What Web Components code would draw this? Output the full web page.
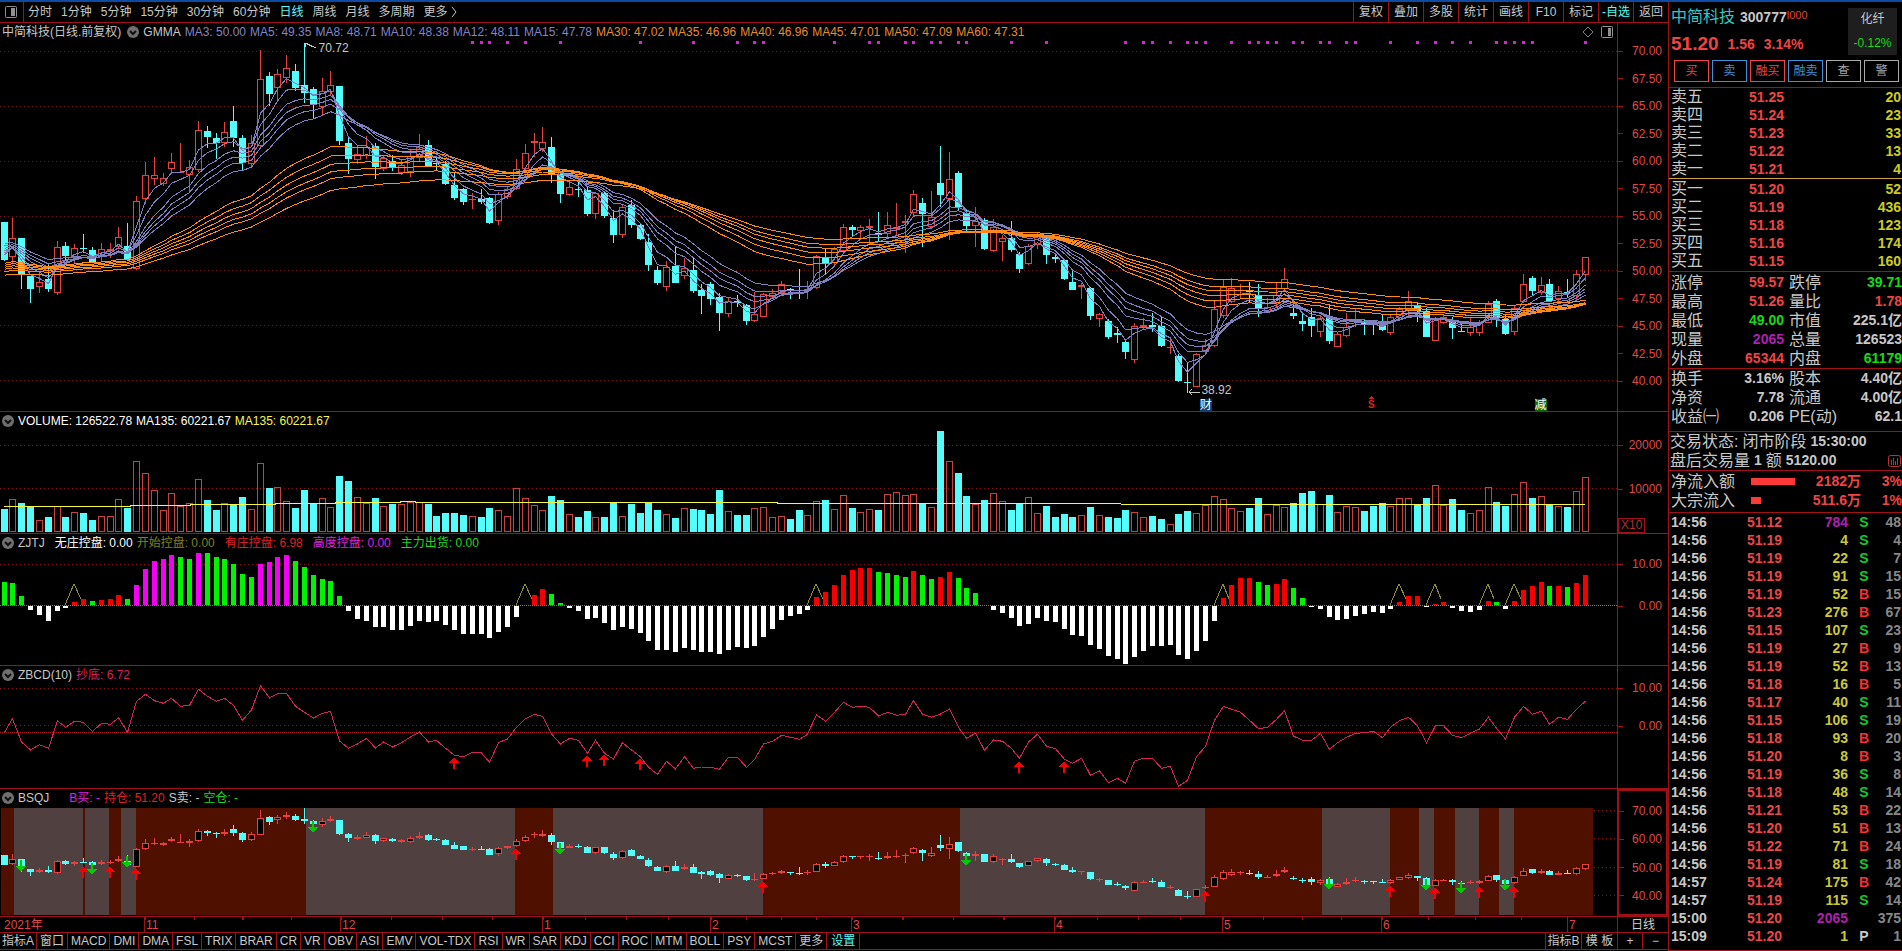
<!DOCTYPE html>
<html lang="zh-CN">
<head>
<meta charset="utf-8">
<title>中简科技 300777</title>
<style>
  html, body {
    background: #000000;
    height: 100%;
    margin: 0;
  }
</style>
</head>
<body>
<stock-app></stock-app>

<script>
  // Vertical readings are in rows, three to a pixel
  const ROWS = 3;
  const PLOT_WIDTH = 1617;

  // Direction, high, body top, body bottom, low
  const CANDLES = `
    d 665 665 780 782;u 655 715 772 788;d 713 713 822 866;d 828 828 868 908;u 820 846 860 878;d 795 838 866 876
    u 722 742 880 886;d 726 738 767 780;u 732 745 775 790;d 703 744 746 760;d 740 750 785 788;u 728 748 772 785
    u 730 748 752 775;u 682 712 742 748;d 668 738 780 783;u 588 604 808 810;u 487 526 596 612;u 472 526 536 555
    u 520 533 551 558;u 458 487 506 522;u 428 516 518 520;u 480 500 524 575;u 363 391 511 516;d 378 393 411 445
    d 400 413 428 476;u 366 397 430 442;d 318 363 415 442;d 405 414 489 514;u 405 430 492 505;u 150 238 437 440
    d 215 228 282 318;u 208 223 265 305;u 165 205 233 250;d 193 213 263 272;d 128 255 278 308;d 262 268 311 358
    u 235 274 320 348;u 213 256 276 288;d 258 258 422 435;d 415 430 476 522;u 438 462 480 493;u 407 440 467 476
    d 430 438 501 537;u 468 474 506 512;d 466 484 504 514;u 478 495 518 524;u 450 467 515 532;u 402 442 475 486
    d 420 436 498 500;d 474 488 492 510;d 482 492 551 556;d 520 555 595 600;d 565 568 606 615;u 578 596 598 626
    d 568 597 606 612;d 590 594 669 672;u 575 583 662 675;u 560 567 592 596;u 477 507 566 570;u 432 458 508 520
    u 398 424 430 470;u 381 427 447 455;d 411 441 521 548;d 520 523 581 610;u 546 560 584 587;d 545 568 570 592
    d 562 570 641 648;u 575 580 641 658;d 575 580 648 655;d 630 655 704 728;u 612 622 704 715;d 600 614 675 683
    d 670 675 717 720;d 703 727 795 812;d 798 810 848 856;u 782 800 860 873;d 738 798 848 850;u 774 804 827 838
    d 775 810 872 880;d 853 870 888 942;d 846 852 896 916;d 880 891 938 992;u 890 902 941 950;d 885 903 909 920
    d 912 915 963 974;u 876 942 962 965;u 878 883 950 950;u 866 878 892 898;u 843 853 880 885;d 863 868 871 896
    d 807 871 873 896;u 843 868 872 896;u 765 769 863 868;d 746 775 790 822;u 742 748 790 795;u 672 682 753 758
    d 674 681 690 710;u 675 680 692 718;u 658 677 683 735;d 635 700 706 727;u 636 676 702 710;u 610 680 686 706
    u 645 663 669 758;u 570 583 640 652;d 594 609 641 740;u 572 650 682 688;d 438 549 585 622;u 456 538 596 720
    d 513 518 622 632;d 630 640 678 692;u 622 662 677 740;d 655 660 747 750;u 657 680 752 755;u 705 713 727 782
    d 662 714 750 757;d 755 762 806 818;u 732 738 793 796;u 698 705 735 748;d 705 712 765 792;d 760 771 776 790
    d 777 780 836 840;d 812 846 869 871;u 848 854 860 896;d 860 864 948 960;u 940 943 956 980;d 958 963 1010 1016
    d 980 999 1006 1028;d 1020 1026 1056 1076;u 970 979 1080 1088;u 955 976 982 990;d 938 975 982 996;d 952 977 1038 1041
    u 1018 1040 1042 1062;d 1062 1068 1143 1146;d 1085 1147 1148 1180;u 1060 1063 1160 1160;u 1018 1036 1055 1062;u 905 928 1037 1042
    u 840 860 948 955;u 833 863 905 910;u 852 870 873 898;d 845 873 875 905;d 852 886 927 950;u 895 920 935 940
    u 845 884 910 920;u 805 837 868 875;d 908 939 947 957;d 940 963 972 992;d 925 951 978 1010;u 945 955 995 1012
    d 918 948 1023 1032;u 998 1003 1040 1042;u 940 982 1007 1010;u 927 960 964 982;d 960 968 970 1005;d 965 969 971 1005
    d 945 976 989 992;u 942 952 998 1004;u 920 928 955 960;u 872 904 930 945;d 908 915 933 965;d 925 932 1010 1011
    u 950 954 1024 1024;u 945 952 968 972;d 950 960 985 1017;d 965 993 995 997;u 953 982 998 1008;u 960 970 998 1007
    u 903 912 968 970;d 897 903 955 980;d 945 957 1001 1005;u 915 925 997 1004;u 822 853 906 910;d 828 834 872 885
    u 832 856 880 885;d 838 852 902 905;u 857 872 898 905;d 837 875 880 892;u 810 823 888 900;u 770 772 826 842
  `.trim().split( /[;\n]+/ ).map( ( entry ) => {
    const [kind, ...rows] = entry.trim().split( ' ' );
    const [high, top, bottom, low] = rows.map( Number );
    return {up: kind === 'u', high, top, bottom, low};
  } );

  const VOLUMES = [
    68, 98, 86, 75, 37, 44, 79, 44, 59, 56, 35, 47, 49, 98, 71, 214, 176, 127, 65, 118,
    77, 86, 160, 95, 65, 86, 80, 104, 68, 208, 131, 136, 94, 71, 125, 85, 101, 76, 167, 152,
    106, 86, 101, 79, 83, 83, 89, 89, 83, 47, 56, 56, 50, 47, 44, 71, 65, 47, 133, 101,
    82, 65, 107, 95, 55, 44, 62, 44, 44, 88, 49, 83, 56, 87, 65, 53, 41, 71, 68, 65,
    53, 125, 62, 50, 50, 71, 74, 44, 47, 38, 65, 50, 92, 95, 68, 110, 71, 59, 68, 65,
    113, 119, 110, 113, 85, 74, 302, 212, 176, 107, 83, 95, 116, 92, 65, 84, 104, 56, 77, 44,
    53, 44, 50, 74, 50, 44, 41, 65, 59, 44, 47, 38, 23, 53, 62, 56, 82, 107, 98, 71,
    62, 71, 101, 53, 80, 74, 86, 116, 122, 85, 110, 59, 77, 74, 62, 78, 86, 77, 101, 101,
    83, 101, 140, 80, 98, 65, 56, 65, 134, 89, 78, 113, 149, 101, 107, 83, 79, 74, 122, 166
  ];

  // g green, m magenta, r red, no letter for white
  const CONTROL = `
    g70 g67 g28 -13 -28 -46 -16 -7 r10 r19 g13 r16 r19 r31 g19 m61 m109 m133 m139 m151
    g145 g139 m157 g157 g145 g139 g124 g94 g85 m124 m130 m145 m151 g133 g115 g91 g79 g73 g28 -16
    -40 -46 -64 -64 -73 -73 -61 -46 -49 -46 -58 -73 -85 -85 -85 -97 -79 -64 -34 r1
    r31 r49 g34 g7 -7 -16 -40 -37 -52 -73 -64 -70 -82 -106 -133 -133 -139 -127 -133 -139
    -139 -145 -133 -124 -127 -121 -94 -70 -43 -31 -25 -13 r25 r40 r61 r91 r106 r112 r112 g100
    g97 g91 g85 r103 g91 g79 r85 r100 g82 g52 g37 0 -13 -22 -37 -61 -55 -37 -46 -49
    -70 -88 -91 -118 -130 -151 -160 -175 -154 -136 -121 -121 -118 -148 -160 -136 -106 -45 r20 r59
    r80 r80 g68 g59 r62 r77 g50 g20 -3 -9 -34 -43 -40 -31 -25 -19 -22 -10 r8 r26
    r26 -3 r4 r8 -6 -16 -19 -13 r11 g8 -10 r11 r44 r56 r68 g56 r56 g53 r65 r89
  `.trim().split( /\s+/ );
  const CARETS = [8, 59, 92, 138, 158, 162, 168, 171];

  const BOTTOM_FISHING = [
    217, 176, 246, 270, 254, 265, 182, 202, 184, 187, 214, 190, 193, 173, 217, 124, 103, 122, 130, 115,
    139, 136, 88, 109, 124, 115, 136, 181, 150, 77, 114, 101, 100, 139, 157, 174, 160, 154, 243, 265,
    252, 235, 264, 246, 261, 248, 231, 216, 246, 241, 265, 286, 290, 277, 279, 307, 248, 237, 202, 176,
    163, 169, 222, 252, 235, 241, 280, 241, 280, 297, 248, 270, 290, 322, 343, 304, 327, 290, 325, 321,
    321, 328, 292, 292, 322, 299, 252, 244, 226, 232, 238, 223, 164, 184, 157, 127, 142, 139, 142, 168,
    157, 166, 163, 122, 163, 172, 162, 147, 202, 235, 220, 271, 240, 244, 265, 295, 246, 223, 259, 266,
    298, 310, 295, 346, 332, 368, 355, 370, 304, 295, 295, 325, 319, 379, 361, 290, 259, 181, 139, 148,
    157, 181, 206, 202, 178, 152, 228, 241, 241, 220, 268, 248, 232, 220, 218, 214, 233, 202, 182, 172,
    197, 249, 197, 197, 226, 233, 220, 207, 172, 205, 237, 172, 139, 163, 154, 193, 172, 178, 148, 123
  ];

  const EVENT_DOTS = [
    53, 54, 55, 57, 59, 63, 72, 78, 83, 85, 86, 94, 98, 99, 102, 103, 105, 106, 108, 109, 114, 118,
    127, 129, 130, 132, 134, 135, 136, 139, 141, 142, 143, 144, 146, 147, 149, 150, 152, 153, 157,
    160, 162, 164, 166, 169, 170, 171, 172, 173, 179
  ];

  // Position bands, alternating hold and empty
  const BANDS = [
    1, 14, 83, 85, 109, 121, 136, 306, 515, 553, 763, 960, 1205, 1322, 1390, 1419, 1434, 1455, 1479, 1499, 1514, 1593
  ];

  const centre = ( index ) => Math.floor( 4 + index * 8.8335 );
  const pixel = ( rows ) => Math.round( rows / ROWS );

  function rect( x, y, width, height, fill ) {
    return `<rect x="${x}" y="${y}" width="${width}" height="${height}" fill="${fill}"/>`;
  }

  function frame( x, y, width, height, stroke, fill = 'none' ) {
    return `<rect x="${x + 0.5}" y="${y + 0.5}" width="${width - 1}" height="${Math.max( height - 1, 1 )}" fill="${fill}" stroke="${stroke}"/>`;
  }

  function gridline( y, dash = '1 3', stroke = '#8c1212', start = 0 ) {
    return `<path d="M${start} ${y + 0.5}H${PLOT_WIDTH}" stroke="${stroke}" stroke-dasharray="${dash}"/>`;
  }

  function polyline( points, stroke ) {
    return `<polyline points="${points.join( ' ' )}" fill="none" stroke="${stroke}"/>`;
  }

  function arrow( x, y, up, fill ) {
    const way = up ? 1 : -1;
    return `<path d="M${x} ${y}l5 ${6 * way}h-4v${6 * way}h-2v${-6 * way}h-4z" fill="${fill}"/>`;
  }

  function candles( convert, fill ) {
    return CANDLES.map( ( bar, index ) => {
      const x = centre( index );
      const high = convert( bar.high );
      const top = convert( bar.top );
      const bottom = convert( bar.bottom );
      const low = convert( bar.low );
      const height = Math.max( bottom - top, 1 );

      if( bar.up ) {
        const body = height > 2 ? frame( x - 3, top, 7, height, '#e84040', fill ) : rect( x - 3, top, 7, height, '#e84040' );
        return rect( x, high, 1, Math.max( top - high, 0 ), '#e84040' ) + rect( x, bottom, 1, Math.max( low - bottom, 0 ), '#e84040' ) + body;
      }

      return rect( x, high, 1, Math.max( low - high, 1 ), '#54fcfc' ) + rect( x - 3, top, 7, height, '#54fcfc' );
    } ).join( '' );
  }

  // Exponential average of the closes
  function average( period, seed ) {
    let last = seed;
    return CANDLES.map( ( bar, index ) => {
      const close = bar.up ? bar.top : bar.bottom;

      if( index > 0 ) {
        last += ( close - last ) * 2 / ( period + 1 );
      }

      return `${centre( index ) + 0.5},${( last / ROWS ).toFixed( 1 )}`;
    } );
  }

  const PLOTS = {
    price() {
      const slow = [[30, 790], [35, 796], [40, 802], [45, 808], [50, 815], [60, 826]];
      const fast = [[3, 765], [5, 758], [8, 752], [10, 745], [12, 738], [15, 730]];
      return [51, 106, 161, 216, 270, 325, 380].map( ( y ) => gridline( y, '1 3', '#701010' ) ).join( '' ) +
        EVENT_DOTS.map( ( index ) => rect( centre( index ) - 1, 41, 3, 3, '#d822d8' ) ).join( '' ) +
        candles( pixel, 'none' ) +
        fast.map( ( [period, seed] ) => polyline( average( period, seed ), '#8080c0' ) ).join( '' ) +
        slow.map( ( [period, seed] ) => polyline( average( period, seed ), '#ff8a1c' ) ).join( '' ) +
        '<path d="M305 43l11 5M305 43h3M305 43v4M1189 392h11M1189 392l3 -3M1189 392l3 3" stroke="#c8c8c8" fill="none"/>' +
        '<path d="M1371 396l3 3h-6z" fill="#e02020"/>';
    },

    volume() {
      const line = [[4, 75], [130, 75], [131, 78], [190, 78], [191, 81], [275, 81], [276, 85], [335, 85], [336, 88], [400, 88], [401, 91], [415, 91], [416, 88], [777, 88], [778, 85], [1120, 85], [1122, 82], [1585, 80]];
      return gridline( 445 ) + gridline( 488 ) + VOLUMES.map( ( rows, index ) => {
        const height = pixel( rows );
        const x = centre( index ) - 3;
        return CANDLES[index].up ? frame( x, 532 - height, 7, height, '#c84040' ) : rect( x, 532 - height, 7, height, '#54fcfc' );
      } ).join( '' ) + polyline( line.map( ( [x, rows] ) => `${x},${531.5 - pixel( rows )}` ), '#f8f840' );
    },

    control() {
      const fills = {g: '#00f400', m: '#f400f4', r: '#f40000'};
      return gridline( 564 ) + gridline( 605, '1 1', '#c06018' ) + CONTROL.map( ( entry, index ) => {
        const fill = fills[entry[0]] || '#ffffff';
        const height = pixel( Math.abs( Number( entry.replace( /^[gmr]/, '' ) ) ) );
        return rect( centre( index ) - 2, fill === '#ffffff' ? 606 : 605 - height, 5, height, fill );
      } ).join( '' ) + CARETS.map( ( index ) => {
        return `<path d="M${centre( index - 1 )} 605L${centre( index )} 584L${centre( index + 1 ) - 2} 599" stroke="#8c8c30" fill="none"/>`;
      } ).join( '' );
    },

    fishing() {
      const marks = [[51, 292], [66, 286], [68, 283], [72, 293], [115, 302], [120, 303]];
      return gridline( 688 ) + gridline( 725 ) + gridline( 732, '1 1', '#a81818' ) +
        polyline( BOTTOM_FISHING.map( ( rows, index ) => `${centre( index ) + 0.5},${( 660 + rows / ROWS ).toFixed( 1 )}` ), '#d82060' ) +
        marks.map( ( [index, rows] ) => arrow( centre( index ), 660 + pixel( rows ), true, '#f80000' ) ).join( '' );
    },

    position() {
      const sells = [[2, 635], [10, 645], [14, 625], [35, 518], [63, 584], [109, 617], [150, 690], [161, 692], [165, 702], [170, 692]];
      const buys = [[9, 618], [12, 617], [15, 625], [58, 565], [86, 664], [136, 690], [157, 675], [162, 682], [167, 678], [171, 677]];
      const convert = ( rows ) => Math.round( 660 + ( 452 + ( rows - 154 ) * 0.2588 ) / ROWS );
      return [810, 838, 867, 895].map( ( y ) => gridline( y, '1 3', '#8c1212', 1594 ) ).join( '' ) +
        BANDS.slice( 1 ).map( ( end, index ) => rect( BANDS[index], 808, end - BANDS[index], 107, index % 2 ? '#504040' : '#501000' ) ).join( '' ) +
        candles( convert, '#000000' ) +
        sells.map( ( [index, rows] ) => arrow( centre( index ), 660 + pixel( rows ), false, '#00cc00' ) ).join( '' ) +
        buys.map( ( [index, rows] ) => arrow( centre( index ), 660 + pixel( rows ), true, '#f80000' ) ).join( '' );
    }
  };

  // Root helper
  function attach( element, markup ) {
    const template = document.createElement( 'template' );
    template.innerHTML = markup;
    element.attachShadow( {mode: 'open'} );
    element.shadowRoot.appendChild( template.content.cloneNode( true ) );
  }

  const RESET = /* css */ `
    button {
      background: none;
      border: none;
      color: inherit;
      cursor: pointer;
      font: inherit;
      margin: 0;
      padding: 0;
      white-space: nowrap;
    }
  `;

  class StockToolbar extends HTMLElement {
    constructor() {
      super();

      const periods = ['分时', '1分钟', '5分钟', '15分钟', '30分钟', '60分钟', '日线', '周线', '月线', '多周期'];
      const actions = ['复权', '叠加', '多股', '统计', '画线', 'F10', '标记', '-自选', '返回'];

      attach( this, /* template */ `
        <style>
          ${RESET}

          :host {
            border-bottom: solid 1px var( --line );
            box-sizing: border-box;
            display: flex;
            height: 21px;
            justify-content: space-between;
            line-height: 20px;
          }

          nav, div {
            display: flex;
          }

          nav {
            gap: 9px;
          }

          .panel {
            align-items: center;
            border-right: solid 1px var( --line );
            display: flex;
            margin-right: -5px;
            padding-left: 5px;
            width: 24px;
          }

          .more {
            align-items: center;
            display: flex;
            gap: 3px;
          }

          .active {
            color: #54fcfc;
          }

          .actions button {
            border-left: solid 1px var( --line );
            box-sizing: border-box;
            text-align: center;
            width: 35px;
          }
        </style>
        <nav>
          <button class="panel" type="button" aria-label="侧栏">
            <svg width="12" height="12" viewBox="0 0 12 12"><rect x="0.5" y="0.5" width="11" height="11" rx="1" fill="none" stroke="#909090"/><rect x="6" y="2" width="4" height="8" fill="#909090"/></svg>
          </button>
          ${periods.map( ( name ) => `<button type="button" class="${name === '日线' ? 'active' : ''}">${name}</button>` ).join( '' )}
          <button class="more" type="button">更多<svg width="6" height="10" viewBox="0 0 6 10"><path d="M1 0l4 5l-4 5" fill="none" stroke="#c0c0c0"/></svg></button>
        </nav>
        <div class="actions">
          ${actions.map( ( name ) => `<button type="button" class="${name === '-自选' ? 'active' : ''}">${name}</button>` ).join( '' )}
        </div>
      ` );
    }
  }

  class ChartPane extends HTMLElement {
    constructor() {
      super();

      attach( this, /* template */ `
        <style>
          :host {
            border-bottom: solid 1px var( --line );
            box-sizing: border-box;
            display: flex;
            min-height: 0;
          }

          .plot {
            display: flex;
            flex: 1;
            flex-direction: column;
            min-width: 0;
            position: relative;
          }

          header {
            align-items: center;
            display: flex;
            gap: 4px;
            height: 18px;
            line-height: 18px;
            white-space: nowrap;
          }

          .chart {
            display: block;
            flex: 1;
            min-height: 0;
            width: 100%;
          }
        </style>
        <div class="plot">
          <header><slot></slot></header>
          <svg class="chart" preserveAspectRatio="none" shape-rendering="crispEdges"></svg>
          <slot name="mark"></slot>
        </div>
        <slot name="axis"></slot>
      ` );

      this.$chart = this.shadowRoot.querySelector( '.chart' );
    }

    // Setup
    connectedCallback() {
      this.$chart.setAttribute( 'viewBox', `0 ${this.getAttribute( 'top' )} ${PLOT_WIDTH} ${this.getAttribute( 'span' )}` );
      this.$chart.innerHTML = PLOTS[this.getAttribute( 'plot' )]();
    }
  }

  class PaneToggle extends HTMLElement {
    constructor() {
      super();

      attach( this, /* template */ `
        <style>
          ${RESET}

          :host {
            display: block;
            height: 14px;
            width: 12px;
          }

          button, svg {
            display: block;
          }
        </style>
        <button type="button" aria-label="指标菜单">
          <svg width="12" height="14" viewBox="0 0 12 14"><circle cx="6" cy="7" r="6" fill="#707070"/><path d="M3 6l3 3l3 -3" fill="none" stroke="#101010" stroke-width="2"/></svg>
        </button>
      ` );
    }
  }

  class ValueAxis extends HTMLElement {
    constructor() {
      super();

      attach( this, /* template */ `
        <style>
          :host {
            border-left: solid 1px var( --line );
            box-sizing: border-box;
            color: #e04848;
            display: flex;
            flex: none;
            flex-direction: column;
            justify-content: space-between;
            line-height: 16px;
            padding-right: 6px;
            position: relative;
            text-align: right;
            width: 51px;
          }

          :host( [selected] ) {
            border: solid 2px #a01014;
          }

          .labels {
            display: contents;
          }

          .labels span {
            background: linear-gradient( var( --line ), var( --line ) ) left center / 5px 1px no-repeat;
            display: block;
          }

          .unit {
            border: solid 1px var( --line );
            bottom: 0;
            color: #b03030;
            left: 0;
            line-height: 13px;
            padding: 0 2px;
            position: absolute;
          }

          .unit:empty {
            display: none;
          }
        </style>
        <div class="labels"></div>
        <span class="unit"></span>
      ` );

      // Elements
      this.$labels = this.shadowRoot.querySelector( '.labels' );
      this.$unit = this.shadowRoot.querySelector( '.unit' );
    }

    // Setup
    connectedCallback() {
      this.$labels.innerHTML = this.getAttribute( 'labels' ).split( ' ' ).map( ( label ) => `<span>${label}</span>` ).join( '' );
      this.$unit.textContent = this.getAttribute( 'unit' );
    }
  }

  class TimeAxis extends HTMLElement {
    constructor() {
      super();

      const months = ['11', '12', '1', '2', '3', '4', '5', '6', '7'];

      attach( this, /* template */ `
        <style>
          :host {
            border-bottom: solid 1px var( --line );
            box-sizing: border-box;
            color: #e04848;
            display: flex;
            height: 16px;
            line-height: 16px;
          }

          .months {
            display: grid;
            flex: 1;
            grid-template-columns: 144fr 196fr 202fr 168fr 141fr 203fr 168fr 159fr 186fr 50fr;
          }

          .year {
            padding-left: 4px;
          }

          .month {
            background: repeating-linear-gradient( 90deg, var( --line ) 0 1px, transparent 1px 25% ) top / 100% 3px no-repeat;
            border-left: solid 1px var( --line );
            padding-left: 1px;
          }

          .month:last-child {
            background: none;
          }

          .period {
            border-left: solid 1px var( --line );
            box-sizing: border-box;
            color: #d0d0d0;
            text-align: center;
            width: 51px;
          }
        </style>
        <div class="months">
          <span class="year">2021年</span>
          ${months.map( ( month ) => `<span class="month">${month}</span>` ).join( '' )}
        </div>
        <span class="period">日线</span>
      ` );
    }
  }

  class IndicatorTabs extends HTMLElement {
    constructor() {
      super();

      const names = [
        '指标A', '窗口', 'MACD', 'DMI', 'DMA', 'FSL', 'TRIX', 'BRAR', 'CR', 'VR', 'OBV', 'ASI', 'EMV', 'VOL-TDX',
        'RSI', 'WR', 'SAR', 'KDJ', 'CCI', 'ROC', 'MTM', 'BOLL', 'PSY', 'MCST', '更多', '设置'
      ];

      attach( this, /* template */ `
        <style>
          ${RESET}

          :host {
            border-bottom: solid 1px var( --line );
            box-sizing: border-box;
            display: flex;
            height: 17px;
            justify-content: space-between;
            line-height: 16px;
          }

          div {
            display: flex;
          }

          .names button {
            border-right: solid 1px var( --line );
            padding: 0 3px;
          }

          .names button:first-child {
            padding: 0 2px;
          }

          .names button:last-child {
            color: #54fcfc;
            padding: 0 4px;
          }

          .tools button {
            border-left: solid 1px var( --line );
            box-sizing: border-box;
            text-align: center;
            width: 36px;
          }

          .tools .zoom {
            width: 25px;
          }

          .tools .zoom:last-child {
            width: 26px;
          }
        </style>
        <div class="names">
          ${names.map( ( name ) => `<button type="button">${name}</button>` ).join( '' )}
        </div>
        <div class="tools">
          <button type="button">指标B</button>
          <button type="button">模 板</button>
          <button class="zoom" type="button">+</button>
          <button class="zoom" type="button">−</button>
        </div>
      ` );
    }
  }

  class QuotePanel extends HTMLElement {
    constructor() {
      super();

      const sells = [['卖五', '51.25', 20], ['卖四', '51.24', 23], ['卖三', '51.23', 33], ['卖二', '51.22', 13], ['卖一', '51.21', 4]];
      const buys = [['买一', '51.20', 52], ['买二', '51.19', 436], ['买三', '51.18', 123], ['买四', '51.16', 174], ['买五', '51.15', 160]];
      const day = [
        ['涨停', '59.57', 'red', '跌停', '39.71', 'green'],
        ['最高', '51.26', 'red', '量比', '1.78', 'red'],
        ['最低', '49.00', 'green', '市值', '225.1亿', ''],
        ['现量', '2065', 'purple', '总量', '126523', ''],
        ['外盘', '65344', 'red', '内盘', '61179', 'green']
      ];
      const company = [
        ['换手', '3.16%', '', '股本', '4.40亿', ''],
        ['净资', '7.78', '', '流通', '4.00亿', ''],
        ['收益㈠', '0.206', '', 'PE(动)', '62.1', '']
      ];
      const order = ( rows ) => rows.map( ( [label, price, amount] ) => `<tr><th>${label}</th><td class="red">${price}</td><td class="yellow">${amount}</td></tr>` ).join( '' );
      const facts = ( rows ) => rows.map( ( row ) => `<tr><th>${row[0]}</th><td class="${row[2]}">${row[1]}</td><th>${row[3]}</th><td class="${row[5]}">${row[4]}</td></tr>` ).join( '' );

      attach( this, /* template */ `
        <style>
          ${RESET}

          :host {
            border-left: solid 1px var( --line );
            box-sizing: border-box;
            display: flex;
            flex-direction: column;
            font-size: 14px;
            font-weight: bold;
            min-width: 0;
          }

          section {
            border-bottom: solid 1px var( --line );
          }

          table {
            border-spacing: 0;
            line-height: 18px;
            table-layout: fixed;
            width: 100%;
          }

          th, td {
            height: 18px;
            padding: 0;
            white-space: nowrap;
          }

          th {
            font-size: 16px;
            font-weight: normal;
            padding-left: 2px;
            text-align: left;
          }

          td {
            text-align: right;
          }

          td:last-child {
            padding-right: 1px;
          }

          .facts th, .facts td {
            height: 19px;
          }

          .facts td + th {
            padding-left: 5px;
          }

          .facts td:last-child {
            padding-right: 0;
          }

          .facts table, .flow, .status {
            line-height: 19px;
          }

          .red { color: #f04444; }
          .green { color: #14dc14; }
          .purple { color: #b020b0; }
          .yellow { color: #cccc20; }

          .head {
            display: flex;
            flex-direction: column;
            height: 85px;
          }

          .summary {
            display: flex;
            height: 58px;
            justify-content: space-between;
            padding: 0 5px 0 2px;
          }

          .name {
            display: flex;
            gap: 5px;
            line-height: 20px;
            padding-top: 5px;
          }

          .name b {
            color: #30c8c8;
            font-size: 16px;
            font-weight: normal;
          }

          .name sup {
            color: #e04040;
            font-size: 11px;
            font-weight: normal;
            line-height: 16px;
            margin-left: -5px;
          }

          .price {
            align-items: center;
            display: flex;
            gap: 9px;
            line-height: 24px;
            padding-top: 5px;
          }

          .price strong {
            font-size: 19px;
          }

          .industry {
            background: #1e1e1e;
            box-sizing: border-box;
            display: flex;
            flex-direction: column;
            font-size: 12px;
            font-weight: normal;
            gap: 8px;
            height: 47px;
            line-height: 16px;
            margin-top: 6px;
            padding-top: 3px;
            text-align: center;
            width: 49px;
          }

          .trade {
            display: flex;
            font-size: 12px;
            font-weight: normal;
            gap: 3px;
            padding: 0 3px 0 5px;
          }

          .trade button {
            border: solid 1px currentColor;
            box-sizing: border-box;
            flex: 1;
            height: 22px;
            line-height: 20px;
          }

          .sell { color: #4090d8; }
          .plain { color: #a8a8a8; }

          .asks {
            border-bottom-color: #d0a040;
          }

          .bids {
            padding: 1px 0;
          }

          .day {
            padding-top: 1px;
          }

          .company {
            padding-bottom: 5px;
          }

          .status p {
            display: flex;
            gap: 4px;
            height: 19px;
            margin: 0;
            padding: 0 1px 0 1px;
          }

          .status span {
            font-size: 16px;
            font-weight: normal;
          }

          .status svg {
            align-self: center;
            margin-left: auto;
          }

          .flow {
            padding: 1px 0 2px;
          }

          .flow p {
            display: grid;
            grid-template-columns: 80px 1fr 64px 41px;
            height: 19px;
            margin: 0;
            padding-left: 2px;
            text-align: right;
          }

          .flow b {
            color: #c8c8c8;
            font-size: 16px;
            font-weight: normal;
            text-align: left;
          }

          .flow i {
            align-self: center;
            background: #ff3838;
            height: 7px;
            justify-self: start;
            width: 44px;
          }

          .flow .small {
            width: 10px;
          }
        </style>
        <section class="head">
          <div class="summary">
            <div>
              <div class="name"><b>中简科技</b><span>300777</span><sup>l000</sup></div>
              <div class="price red"><strong>51.20</strong><span>1.56</span><span>3.14%</span></div>
            </div>
            <div class="industry"><span>化纤</span><span class="green">-0.12%</span></div>
          </div>
          <div class="trade">
            <button class="red" type="button">买</button>
            <button class="sell" type="button">卖</button>
            <button class="red" type="button">融买</button>
            <button class="sell" type="button">融卖</button>
            <button class="plain" type="button">查</button>
            <button class="plain" type="button">警</button>
          </div>
        </section>
        <section class="asks"><table><colgroup><col style="width: 44px"><col style="width: 71px"><col></colgroup>${order( sells )}</table></section>
        <section class="bids"><table><colgroup><col style="width: 44px"><col style="width: 71px"><col></colgroup>${order( buys )}</table></section>
        <section class="facts day"><table><colgroup><col style="width: 52px"><col style="width: 63px"><col style="width: 52px"><col></colgroup>${facts( day )}</table></section>
        <section class="facts company"><table><colgroup><col style="width: 52px"><col style="width: 63px"><col style="width: 52px"><col></colgroup>${facts( company )}</table></section>
        <section class="status">
          <p><span>交易状态:</span><span>闭市阶段</span>15:30:00</p>
          <p><span>盘后交易量</span>1<span>额</span>5120.00
            <svg width="13" height="12" viewBox="0 0 13 12"><rect x="0.5" y="0.5" width="12" height="11" rx="2" fill="none" stroke="#c03030"/><path d="M3.5 5v5M5.5 3v7M7.5 6v4M9.5 3v7" stroke="#c03030"/></svg>
          </p>
        </section>
        <section class="flow red">
          <p><b>净流入额</b><i></i><span>2182万</span><span>3%</span></p>
          <p><b>大宗流入</b><i class="small"></i><span>511.6万</span><span>1%</span></p>
        </section>
        <slot></slot>
      ` );
    }
  }

  class TradeList extends HTMLElement {
    constructor() {
      super();

      const trades = [
        ['14:56', '51.12', 784, 'S', 48], ['14:56', '51.19', 4, 'S', 4], ['14:56', '51.19', 22, 'S', 7], ['14:56', '51.19', 91, 'S', 15],
        ['14:56', '51.19', 52, 'B', 15], ['14:56', '51.23', 276, 'B', 67], ['14:56', '51.15', 107, 'S', 23], ['14:56', '51.19', 27, 'B', 9],
        ['14:56', '51.19', 52, 'B', 13], ['14:56', '51.18', 16, 'B', 5], ['14:56', '51.17', 40, 'S', 11], ['14:56', '51.15', 106, 'S', 19],
        ['14:56', '51.18', 93, 'B', 20], ['14:56', '51.20', 8, 'B', 3], ['14:56', '51.19', 36, 'S', 8], ['14:56', '51.18', 48, 'S', 14],
        ['14:56', '51.21', 53, 'B', 22], ['14:56', '51.20', 51, 'B', 13], ['14:56', '51.22', 71, 'B', 24], ['14:56', '51.19', 81, 'S', 18],
        ['14:57', '51.24', 175, 'B', 42], ['14:57', '51.19', 115, 'S', 14], ['15:00', '51.20', 2065, '', 375], ['15:09', '51.20', 1, 'P', 1]
      ];

      attach( this, /* template */ `
        <style>
          :host {
            border-bottom: solid 1px var( --line );
            box-sizing: border-box;
            display: block;
            flex: 1;
          }

          table {
            border-spacing: 0;
            line-height: 18px;
            table-layout: fixed;
            width: 100%;
          }

          td {
            height: 18px;
            padding: 0;
            text-align: right;
          }

          td:first-child {
            padding-left: 2px;
            text-align: left;
          }

          .price { color: #e84848; }
          .amount { color: #c8c838; }
          .large { color: #b020b0; }
          .S { color: #14c828; }
          .B { color: #f83030; }
          .count { color: #888888; padding-right: 1px; }

          .side {
            padding-left: 4px;
            text-align: center;
          }
        </style>
        <table>
          <colgroup><col style="width: 50px"><col><col style="width: 66px"><col style="width: 28px"><col style="width: 26px"></colgroup>
          ${trades.map( ( [time, price, amount, side, count] ) => `
            <tr><td>${time}</td><td class="price">${price}</td><td class="${amount > 500 ? 'large' : 'amount'}">${amount}</td><td class="side ${side}">${side}</td><td class="count">${count}</td></tr>
          ` ).join( '' )}
        </table>
      ` );
    }
  }

  class StockApp extends HTMLElement {
    constructor() {
      super();

      const averages = [
        ['MA3', '50.00'], ['MA5', '49.35'], ['MA8', '48.71'], ['MA10', '48.38'], ['MA12', '48.11'], ['MA15', '47.78'],
        ['MA30', '47.02'], ['MA35', '46.96'], ['MA40', '46.96'], ['MA45', '47.01'], ['MA50', '47.09'], ['MA60', '47.31']
      ];

      attach( this, /* template */ `
        <style>
          :host {
            --line: #a01014;
            border-top: solid 2px #0c4aa4;
            box-sizing: border-box;
            color: #c8c8c8;
            display: grid;
            font: 12px "Liberation Sans", "Noto Sans CJK SC", sans-serif;
            grid-template-columns: minmax( 0, 1fr ) 234px;
            min-height: 100vh;
          }

          main {
            display: grid;
            grid-template-rows: auto 389fr 122fr 132fr 123fr 128fr auto auto 1px;
            min-width: 0;
          }

          pane-toggle {
            margin-left: 2px;
          }

          .title {
            margin-left: 2px;
          }

          .gap { margin-left: 6px; }
          .wide { margin-left: 16px; }
          .fast { color: #8484c4; }
          .slow { color: #e88c30; }
          .white { color: #ffffff; }
          .yellow { color: #f8f850; }
          .olive { color: #808020; }
          .red { color: #e02020; }
          .magenta { color: #e020e0; }
          .green { color: #20d820; }
          .pink { color: #d82468; }

          .icons {
            display: flex;
            gap: 7px;
            margin-left: auto;
            margin-right: 4px;
          }

          [slot='mark'] {
            line-height: 12px;
            position: absolute;
            white-space: nowrap;
          }

          .high { left: 19.7%; top: 5%; }
          .low { left: 74.3%; top: 93%; }

          .badge {
            color: #ffffff;
            height: 12px;
            top: 96.8%;
            width: 12px;
          }

          .report { background: #0a3c78; left: 74.2%; }
          .reduce { background: #0c6c0c; left: 94.9%; }

          .dividend {
            color: #e02020;
            font-size: 10px;
            font-weight: bold;
            left: 84.6%;
            top: 96.9%;
          }

          .price { padding-bottom: 22px; padding-top: 20px; }
          .volume { padding-bottom: 36px; padding-top: 25px; }
          .control { padding-bottom: 51px; padding-top: 22px; }
          .fishing { padding-bottom: 54px; padding-top: 14px; }
          .position { padding-bottom: 10px; padding-right: 4px; padding-top: 12px; }
        </style>
        <main>
          <stock-toolbar></stock-toolbar>
          <chart-pane plot="price" top="41" span="370">
            <span class="title">中简科技(日线.前复权)</span>
            <pane-toggle></pane-toggle>
            <span>GMMA</span>
            ${averages.map( ( [name, value], index ) => `<span class="${index < 6 ? 'fast' : 'slow'}">${name}: ${value}</span>` ).join( '' )}
            <span class="icons">
              <svg width="12" height="12" viewBox="0 0 12 12"><path d="M6 1l5 5l-5 5l-5 -5z" fill="none" stroke="#808080"/></svg>
              <svg width="12" height="12" viewBox="0 0 12 12"><rect x="0.5" y="0.5" width="11" height="11" rx="1" fill="none" stroke="#909090"/><rect x="7" y="2" width="3" height="8" fill="#909090"/></svg>
            </span>
            <span slot="mark" class="high">70.72</span>
            <span slot="mark" class="low">38.92</span>
            <span slot="mark" class="badge report">财</span>
            <span slot="mark" class="badge reduce">减</span>
            <span slot="mark" class="dividend">S</span>
            <value-axis slot="axis" class="price" labels="70.00 67.50 65.00 62.50 60.00 57.50 55.00 52.50 50.00 47.50 45.00 42.50 40.00"></value-axis>
          </chart-pane>
          <chart-pane plot="volume" top="430" span="103">
            <pane-toggle></pane-toggle>
            <span class="white">VOLUME: 126522.78</span>
            <span class="white">MA135: 60221.67</span>
            <span class="yellow">MA135: 60221.67</span>
            <value-axis slot="axis" class="volume" labels="20000 10000" unit="X10"></value-axis>
          </chart-pane>
          <chart-pane plot="control" top="552" span="113">
            <pane-toggle></pane-toggle>
            <span>ZJTJ</span>
            <span class="white gap">无庄控盘: 0.00</span>
            <span class="olive">开始控盘: 0.00</span>
            <span class="red gap">有庄控盘: 6.98</span>
            <span class="magenta gap">高度控盘: 0.00</span>
            <span class="green gap">主力出货: 0.00</span>
            <value-axis slot="axis" class="control" labels="10.00 0.00"></value-axis>
          </chart-pane>
          <chart-pane plot="fishing" top="684" span="104">
            <pane-toggle></pane-toggle>
            <span>ZBCD(10)</span>
            <span class="pink">抄底: 6.72</span>
            <value-axis slot="axis" class="fishing" labels="10.00 0.00"></value-axis>
          </chart-pane>
          <chart-pane plot="position" top="807" span="109">
            <pane-toggle></pane-toggle>
            <span>BSQJ</span>
            <span class="magenta wide">B买: -</span>
            <span class="red">持仓: 51.20</span>
            <span>S卖: -</span>
            <span class="green">空仓: -</span>
            <value-axis slot="axis" class="position" selected labels="70.00 60.00 50.00 40.00"></value-axis>
          </chart-pane>
          <time-axis></time-axis>
          <indicator-tabs></indicator-tabs>
        </main>
        <quote-panel><trade-list></trade-list></quote-panel>
      ` );
    }
  }

  window.customElements.define( 'stock-toolbar', StockToolbar );
  window.customElements.define( 'chart-pane', ChartPane );
  window.customElements.define( 'pane-toggle', PaneToggle );
  window.customElements.define( 'value-axis', ValueAxis );
  window.customElements.define( 'time-axis', TimeAxis );
  window.customElements.define( 'indicator-tabs', IndicatorTabs );
  window.customElements.define( 'quote-panel', QuotePanel );
  window.customElements.define( 'trade-list', TradeList );
  window.customElements.define( 'stock-app', StockApp );
</script>
</body>
</html>
